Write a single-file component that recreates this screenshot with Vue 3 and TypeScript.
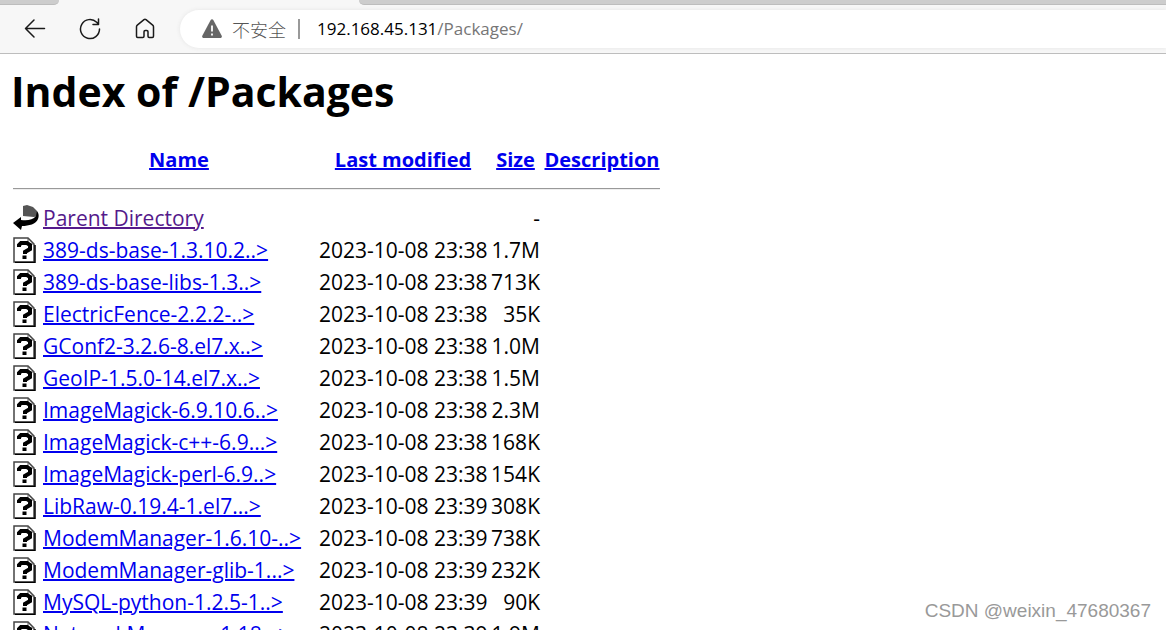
<script setup lang="ts">
interface Entry {
  name: string
  modified: string
  size: string
}

const headings: string[] = ['Name', 'Last modified', 'Size', 'Description']

const entries: Entry[] = [
  { name: '389-ds-base-1.3.10.2..>', modified: '2023-10-08 23:38', size: '1.7M' },
  { name: '389-ds-base-libs-1.3..>', modified: '2023-10-08 23:38', size: '713K' },
  { name: 'ElectricFence-2.2.2-..>', modified: '2023-10-08 23:38', size: '35K' },
  { name: 'GConf2-3.2.6-8.el7.x..>', modified: '2023-10-08 23:38', size: '1.0M' },
  { name: 'GeoIP-1.5.0-14.el7.x..>', modified: '2023-10-08 23:38', size: '1.5M' },
  { name: 'ImageMagick-6.9.10.6..>', modified: '2023-10-08 23:38', size: '2.3M' },
  { name: 'ImageMagick-c++-6.9...>', modified: '2023-10-08 23:38', size: '168K' },
  { name: 'ImageMagick-perl-6.9..>', modified: '2023-10-08 23:38', size: '154K' },
  { name: 'LibRaw-0.19.4-1.el7...>', modified: '2023-10-08 23:39', size: '308K' },
  { name: 'ModemManager-1.6.10-..>', modified: '2023-10-08 23:39', size: '738K' },
  { name: 'ModemManager-glib-1...>', modified: '2023-10-08 23:39', size: '232K' },
  { name: 'MySQL-python-1.2.5-1..>', modified: '2023-10-08 23:39', size: '90K' },
  { name: 'NetworkManager-1.18...>', modified: '2023-10-08 23:39', size: '1.9M' },
]
</script>

<template>
  <div class="window">
    <header class="chrome">
      <div class="tabs">
        <span class="tab-edge left"></span>
        <span class="tab-edge right"></span>
      </div>
      <div class="toolbar">
        <button type="button" class="nav" aria-label="Back">
          <svg viewBox="0 0 22 22"><path d="M20.500 10.500H1.500M10 2L1.500 10.500l8.500 8.500" /></svg>
        </button>
        <button type="button" class="nav" aria-label="Refresh">
          <svg viewBox="0 0 22 22"><path d="M20.500 11a9.500 9.500 0 1 1-2.800-6.700L19 5.600M19.500 1v5.500h-5.500" /></svg>
        </button>
        <button type="button" class="nav" aria-label="Home">
          <svg viewBox="0 0 22 22"><path d="M2.500 8.800c0-.7.3-1.200.8-1.600l6.700-5.500c.6-.5 1.400-.5 2 0l6.700 5.500c.5.400.8.900.8 1.600v9.500c0 .7-.5 1.200-1.200 1.200h-3.100c-.7 0-1.200-.5-1.200-1.200v-4.600c0-.7-.5-1.200-1.200-1.200h-1.600c-.7 0-1.200.5-1.200 1.200v4.600c0 .7-.5 1.200-1.200 1.200H3.700c-.7 0-1.200-.5-1.200-1.200z" /></svg>
        </button>
        <div class="address">
          <svg class="warning" viewBox="0 0 20 20">
            <path d="M8.700 1c.6-1 2-1 2.600 0l8.400 15.800c.5 1-.2 2.200-1.300 2.200H1.600c-1.100 0-1.800-1.200-1.300-2.200z" fill="#666" />
            <path d="M10 6.500v6M10 14.400v2" stroke="#fff" stroke-width="1.800" />
          </svg>
          <span class="insecure">不安全</span>
          <span class="divider"></span>
          <span class="url">192.168.45.131<span class="path">/Packages/</span></span>
        </div>
      </div>
    </header>

    <main class="page">
      <h1>Index of /Packages</h1>
      <table>
        <colgroup>
          <col class="c-icon" />
          <col class="c-name" />
          <col class="c-date" />
          <col class="c-size" />
          <col class="c-desc" />
        </colgroup>
        <thead>
          <tr>
            <td></td>
            <th v-for="h in headings" :key="h" scope="col"><a href="#">{{ h }}</a></th>
          </tr>
          <tr class="rule">
            <td colspan="5"><hr /></td>
          </tr>
        </thead>
        <tbody>
          <tr>
            <td>
              <svg class="icon" viewBox="0 0 26 26">
                <path d="M10 1l4-1 6 2 4 4v5l-3 1-11-1z" fill="#555" />
                <path d="M24 6c2 3 2 5 1 8-2 5-9 7-16 7l-1 4L0 18l8-6v3c6 1 12 0 15-4z" fill="#000" />
              </svg>
            </td>
            <td><a href="#" class="visited">Parent Directory</a></td>
            <td></td>
            <td class="size">-</td>
            <td></td>
          </tr>
          <tr v-for="e in entries" :key="e.name">
            <td>
              <svg class="icon" viewBox="0 0 26 26">
                <path d="M1 1h14l6 6v18H1z" fill="#fff" stroke="#444" stroke-width="1.500" />
                <path d="M15 1v6h6" fill="none" stroke="#555" />
                <path d="M2 25.500h20V8" fill="none" stroke="#000" stroke-width="1.500" />
                <path d="M6 10V8l2-2h6l3 2v4l-5 3v2M11.500 18.500v3.500" fill="none" stroke="#000" stroke-width="4" />
              </svg>
            </td>
            <td><a href="#">{{ e.name }}</a></td>
            <td class="date">{{ e.modified }}</td>
            <td class="size">{{ e.size }}</td>
            <td></td>
          </tr>
        </tbody>
      </table>
    </main>
    <div class="watermark">CSDN @weixin_47680367</div>
  </div>
</template>

<style>
body {
  margin: 0;
  background: #fff;
}
</style>

<style scoped>
.window {
  position: relative;
  height: 100vh;
  overflow: hidden;
  display: flex;
  flex-direction: column;
  font-family: "Open Sans", "Noto Sans", "Noto Sans CJK SC", sans-serif;
  color: #000;
}
.chrome {
  flex: none;
  background: #f7f7f7;
  border-bottom: 1px solid #bdbdbd;
}
.tabs {
  display: flex;
  gap: 300px;
  height: 5px;
}
.tab-edge {
  box-sizing: border-box;
  background: #cdcdcd;
  border-bottom: 1px solid #bdbdbd;
}
.left {
  width: 59px;
  border-bottom-right-radius: 5px;
}
.right {
  flex: 1;
  border-bottom-left-radius: 5px;
}
.toolbar {
  display: flex;
  align-items: center;
  height: 48px;
  padding-left: 7px;
}
.nav {
  width: 55px;
  height: 40px;
  padding: 0;
  border: 0;
  background: none;
  display: flex;
  align-items: center;
  justify-content: center;
}
.nav svg {
  width: 22px;
  height: 22px;
  fill: none;
  stroke: #1a1a1a;
  stroke-width: 1.5;
  stroke-linejoin: round;
  stroke-linecap: round;
}
.address {
  flex: 1;
  display: flex;
  align-items: center;
  height: 38px;
  margin-left: 8px;
  padding-left: 22px;
  border-radius: 19px 0 0 19px;
  background: #fff;
  box-shadow: 0 0 4px #e4e4e4;
  font-size: 17px;
  line-height: 24px;
}
.warning {
  width: 20px;
  height: 20px;
  margin-right: 10px;
}
.insecure {
  font-family: "Noto Sans CJK SC", sans-serif;
  font-size: 18px;
  font-weight: 300;
  color: #555;
}
.divider {
  width: 2px;
  height: 20px;
  margin: 0 17px 0 12px;
  background: #999;
}
.path {
  color: #767676;
}
.page {
  padding: 9px 11px;
}
h1 {
  margin: 0 0 25px;
  font-size: 41px;
  line-height: 56px;
}
table {
  table-layout: fixed;
  width: 651px;
  border-collapse: collapse;
  font-size: 21px;
  line-height: 32px;
}
.c-icon {
  width: 30px;
}
.c-name {
  width: 276px;
}
.c-date {
  width: 172px;
}
.c-size {
  width: 53px;
}
td,
th {
  height: 32px;
  padding: 0 2px;
  text-align: left;
  white-space: nowrap;
}
th {
  text-align: center;
  font-size: 20px;
}
.size,
.date {
  text-align: right;
}
hr {
  margin: 12px 0;
  border: 0;
  border-top: 1px solid #999;
  border-bottom: 1px solid #eee;
}
.rule td {
  height: 26px;
}
.icon {
  display: block;
  width: 26px;
  height: 26px;
}
a {
  color: #00e;
  text-decoration: underline;
  text-decoration-thickness: 2px;
}
.visited {
  color: #551a8b;
}
.watermark {
  position: absolute;
  right: 15px;
  bottom: 8px;
  font: 19px/22px "Liberation Sans", sans-serif;
  color: #999;
}
</style>
